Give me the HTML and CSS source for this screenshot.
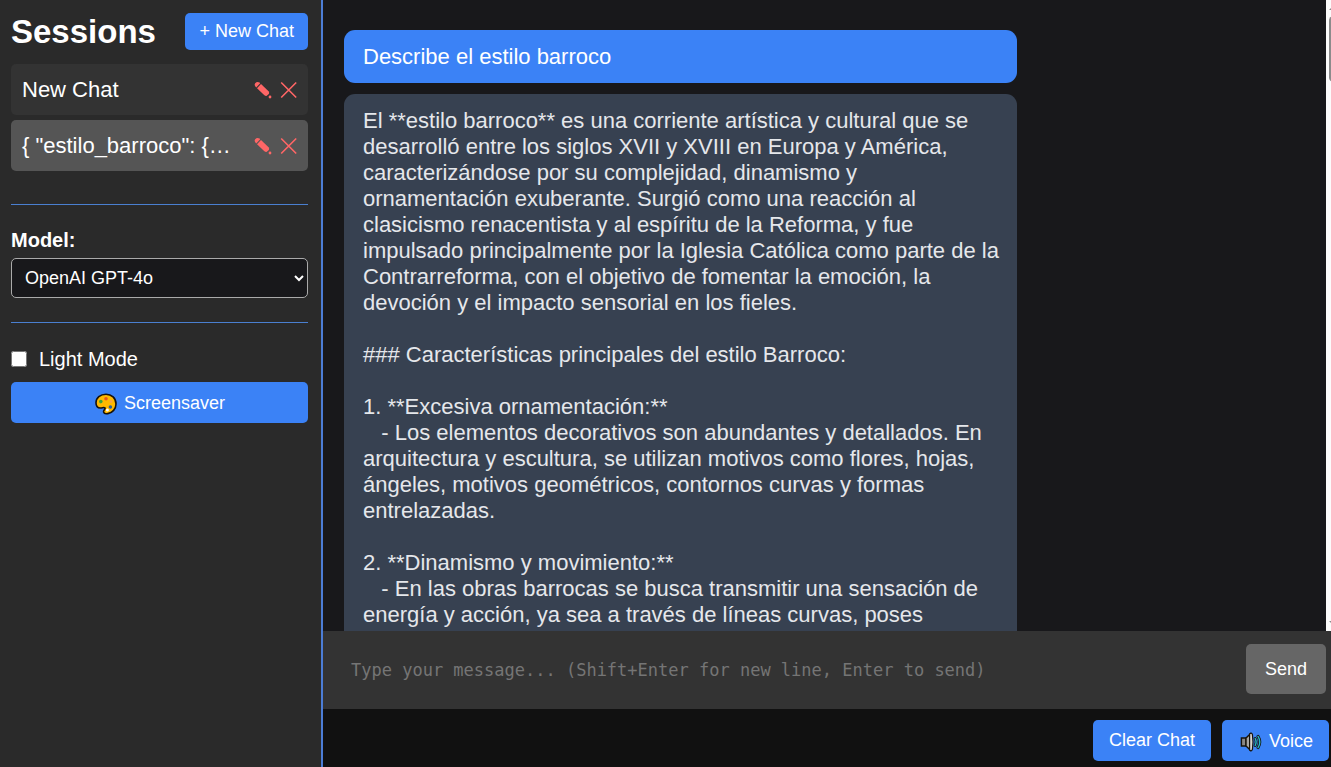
FILE: index.html
```
<!DOCTYPE html>
<html lang="en">
<head>
    <meta charset="UTF-8">
    <meta name="viewport" content="width=device-width, initial-scale=1.0">
    <title>Chat Sessions</title>
    <link rel="stylesheet" href="styles.css">
</head>
<body>
    <!-- Shared icons -->
    <svg class="icon-defs" aria-hidden="true">
        <symbol id="icon-pencil" viewBox="0 0 18 18">
            <path d="M1.2 2.2 Q3 .2 5.6 1.6 L6.2 2.3 L2.2 6.4 Q-.2 4.4 1.2 2.2Z"/>
            <path d="M7 3.1 L14.8 10.4 Q15.6 12.1 14.8 13 L12.8 14.8 Q11.6 15.2 10.4 14.2 L3 7.2Z"/>
            <circle cx="16" cy="16" r="1.4"/>
        </symbol>
        <symbol id="icon-close" viewBox="0 0 18 18">
            <path d="M1.2 1.5 L16.2 16.5 M16.2 1.5 L1.2 16.5" fill="none" stroke="currentColor" stroke-width="1.6"/>
        </symbol>
    </svg>

    <div class="container">
        <aside class="sidebar">
            <div class="sidebar-header">
                <h1>Sessions</h1>
                <button class="button new-chat">+ New Chat</button>
            </div>
            <ul class="session-list">
                <li class="session">
                    <span class="session-name">New Chat</span>
                    <button class="icon-button" aria-label="Rename"><svg class="icon"><use href="#icon-pencil"/></svg></button>
                    <button class="icon-button" aria-label="Delete"><svg class="icon"><use href="#icon-close"/></svg></button>
                </li>
                <li class="session active">
                    <span class="session-name">{ "estilo_barroco": {…</span>
                    <button class="icon-button" aria-label="Rename"><svg class="icon"><use href="#icon-pencil"/></svg></button>
                    <button class="icon-button" aria-label="Delete"><svg class="icon"><use href="#icon-close"/></svg></button>
                </li>
            </ul>
            <div class="section">
                <label class="model-label" for="model">Model:</label>
                <select class="model-select" id="model">
                    <option>OpenAI GPT-4o</option>
                </select>
            </div>
            <div class="section">
                <div class="theme-row">
                    <input type="checkbox" id="light-mode">
                    <label for="light-mode">Light Mode</label>
                </div>
                <button class="button with-emoji screensaver">
                    <svg class="emoji" viewBox="0 0 22 22" aria-hidden="true">
                        <path d="M11 1.2 C5.2 1.2 1 5 1 9.8 C1 13 2.8 15 5.4 15 C7.4 15 8.8 14 9.9 14.8 C11 15.7 8.2 17.2 8.6 19 C9 20.6 11 21 12.8 20.6 C17.4 19.8 21 16 21 11 C21 5.2 16.6 1.2 11 1.2Z" fill="#ffb900" stroke="#17130c" stroke-width="1.6"/>
                        <circle cx="5.8" cy="8.6" r="1.8" fill="#3fa33a"/>
                        <circle cx="11" cy="5.8" r="1.8" fill="#e8591c"/>
                        <circle cx="16" cy="8.6" r="1.4" fill="#f7a04a"/>
                        <circle cx="15.4" cy="14" r="1.8" fill="#2a5f9e"/>
                        <circle cx="12.4" cy="17" r="1.5" fill="#fff"/>
                    </svg>
                    Screensaver
                </button>
            </div>
        </aside>

        <main class="main-content">
            <div class="chat">
                <div class="messages">
                    <div class="message user">Describe el estilo barroco</div>
                    <div class="message assistant">El **estilo barroco** es una corriente artística y cultural que se desarrolló entre los siglos XVII y XVIII en Europa y América, caracterizándose por su complejidad, dinamismo y ornamentación exuberante. Surgió como una reacción al clasicismo renacentista y al espíritu de la Reforma, y fue impulsado principalmente por la Iglesia Católica como parte de la Contrarreforma, con el objetivo de fomentar la emoción, la devoción y el impacto sensorial en los fieles.

### Características principales del estilo Barroco:

1. **Excesiva ornamentación:**
   - Los elementos decorativos son abundantes y detallados. En arquitectura y escultura, se utilizan motivos como flores, hojas, ángeles, motivos geométricos, contornos curvas y formas entrelazadas.

2. **Dinamismo y movimiento:**
   - En las obras barrocas se busca transmitir una sensación de energía y acción, ya sea a través de líneas curvas, poses</div>
                </div>
                <div class="scroll-rail">
                    <div class="scroll-arrow up"></div>
                    <div class="scroll-thumb"></div>
                    <div class="scroll-arrow down"></div>
                </div>
            </div>
            <form class="composer">
                <textarea class="composer-input" rows="1" aria-label="Message" placeholder="Type your message... (Shift+Enter for new line, Enter to send)"></textarea>
                <button class="button send" type="button">Send</button>
            </form>
            <div class="footer">
                <button class="button clear">Clear Chat</button>
                <button class="button with-emoji voice">
                    <svg class="emoji" viewBox="0 0 22 22" aria-hidden="true">
                        <path d="M1.4 7 H6 V15 H1.4Z" fill="#8a8886" stroke="#17130c" stroke-width="1.4"/>
                        <path d="M6 7 L10 3.2 V18.8 L6 15Z" fill="#a8a5a2" stroke="#17130c" stroke-width="1.4"/>
                        <path d="M9.6 3 Q11.4 1.2 12.4 3.4 Q13.6 11 12.4 18.6 Q11.4 20.8 9.6 19Z" fill="#d8d5d2" stroke="#17130c" stroke-width="1.2"/>
                        <g fill="none" stroke-linecap="round">
                            <path d="M15.2 7.6 Q17 11 15.2 14.4 M18 5.4 Q21.6 11 18 16.6" stroke="#17130c" stroke-width="3"/>
                            <path d="M15.2 7.6 Q17 11 15.2 14.4 M18 5.4 Q21.6 11 18 16.6" stroke="#26b5c9" stroke-width="1.4"/>
                        </g>
                    </svg>
                    Voice
                </button>
            </div>
        </main>
    </div>
</body>
</html>
```
FILE: styles.css
```
* { box-sizing: border-box; }
body { margin: 0; font-family: Arial, "Liberation Sans", sans-serif; font-size: 20px; color: #fff; background-color: #18181b; }
.icon-defs { display: none; }
.container { display: flex; height: 100vh; overflow: hidden; }

/* Buttons */
.button { display: flex; align-items: center; justify-content: center; height: 41px; padding: 0 16px; font-family: inherit; font-size: 18px; color: #fff; background-color: #3b82f6; border: none; border-radius: 5px; cursor: pointer; white-space: nowrap; }
.button:hover { background-color: #2563eb; }
.button.with-emoji { padding: 2px 16px 0 17px; }
.emoji { width: 22px; height: 22px; margin-right: 7px; }
.icon-button { display: flex; padding: 0; color: #ff6666; background: none; border: none; cursor: pointer; }
.icon { width: 18px; height: 18px; fill: currentColor; }

/* Sidebar */
.sidebar { flex: 0 0 323px; padding: 13px 13px 13px 11px; background-color: #2a2a2a; border-right: 2px solid #4c7dd6; }
.sidebar-header { display: flex; justify-content: space-between; align-items: center; margin-bottom: 14px; }
.sidebar-header h1 { margin: 0; font-size: 33px; line-height: 37px; }
.button.new-chat { height: 37px; padding: 0 14px; }
.session-list { display: flex; flex-direction: column; gap: 5px; margin: 0 0 33px; padding: 0; list-style: none; }
.session { display: flex; align-items: center; gap: 8px; height: 51px; padding: 0 10px 0 11px; background-color: #333; border-radius: 5px; }
.session.active { background-color: #555; }
.session-name { flex: 1; font-size: 22px; line-height: 26px; white-space: nowrap; }
.section { padding-top: 23px; border-top: 1px solid #4a7fd0; }
.model-label { display: block; margin-bottom: 6px; font-weight: bold; line-height: 24px; }
.model-select { width: 100%; height: 40px; margin-bottom: 24px; padding: 0 4px 0 9px; font-family: inherit; font-size: 18px; color: #fff; background-color: #18181b; border: 1px solid #aaa; border-radius: 5px; }
.theme-row { display: flex; align-items: center; gap: 12px; margin-bottom: 10px; line-height: 26px; }
.theme-row input { width: 16px; height: 16px; margin: 0; }
.button.screensaver { width: 100%; }

/* Chat */
.main-content { flex: 1; display: flex; flex-direction: column; min-width: 0; }
.chat { flex: 1; display: flex; min-height: 0; }
.messages { flex: 1; display: flex; flex-direction: column; align-items: flex-start; gap: 11px; padding: 30px 21px 0; overflow: hidden; }
.message { flex-shrink: 0; width: 70%; padding: 14px 16px 13px 19px; font-size: 22px; line-height: 26px; white-space: pre-wrap; border-radius: 11px; }
.message.user { background-color: #3b82f6; }
.message.assistant { color: #e5e7eb; background-color: #374151; }
.scroll-rail { display: flex; flex-direction: column; width: 5px; padding: 6px 0 6px 3px; overflow: hidden; background-color: #fcfcfc; }
.scroll-thumb { width: 9px; height: 66px; margin: 6px 0 auto; background-color: #8b8b8b; border-radius: 5px; }
.scroll-arrow { width: 8px; border: 4px solid transparent; }
.scroll-arrow.up { border-top: none; border-bottom-color: #8b8b8b; }
.scroll-arrow.down { border-bottom: none; border-top-color: #8b8b8b; }

.composer { display: flex; align-items: center; height: 78px; padding: 0 5px 2px 0; background-color: #333; }
.composer-input { flex: 1; height: 50px; padding: 14px 28px 12px; font-family: "DejaVu Sans Mono", monospace; font-size: 17px; line-height: 24px; color: #fff; background: none; border: none; outline: none; resize: none; overflow: hidden; }
.composer-input::placeholder { color: #757575; }
.button.send { width: 80px; height: 50px; background-color: #666; }
.footer { display: flex; justify-content: flex-end; align-items: center; gap: 11px; height: 58px; padding: 5px 2px 0; background-color: #111; }
.footer .voice { padding-left: 18px; }
```
